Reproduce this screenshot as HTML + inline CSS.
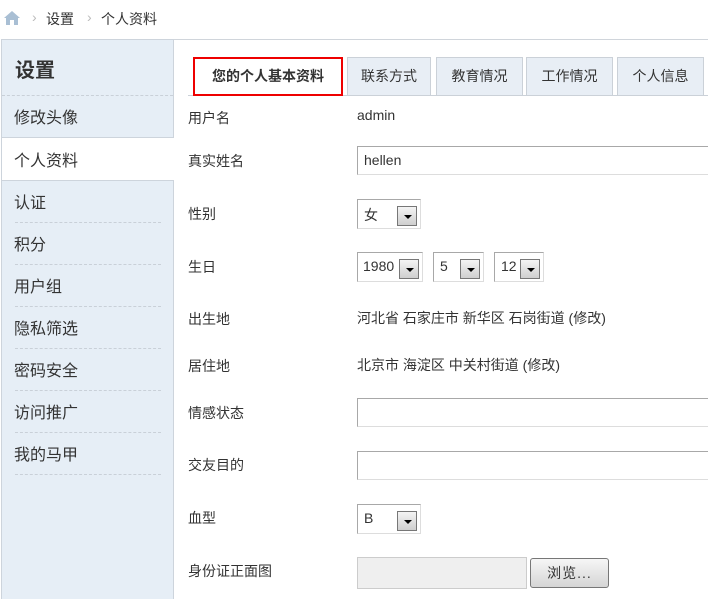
<!DOCTYPE html>
<html><head><meta charset="utf-8"><style>
*{margin:0;padding:0;box-sizing:border-box}
body{width:708px;height:593px;overflow:hidden;background:#fff;font-family:"Liberation Sans","Noto Sans CJK SC",sans-serif;font-size:14px;color:#333;position:relative}
.a{position:absolute;white-space:nowrap}
.side{position:absolute;left:1px;top:39px;width:173px;height:560px;background:#e6eef6;border:1px solid #cdd4dc;border-bottom:none}
.dash{position:absolute;left:15px;width:146px;border-top:1px dashed #c9d0d8}
.si{position:absolute;left:14px;font-size:16px;color:#333}
.tab{position:absolute;top:57px;height:38px;background:#e8eef5;border:1px solid #cbd1d8;border-bottom:none;font-size:14px;text-align:center;line-height:36px;color:#333}
.lab{position:absolute;left:188px;font-size:14px;color:#333}
.inp{position:absolute;left:357px;width:360px;height:29px;border:1px solid #a8a8a8;border-right:none;border-bottom-color:#ddd;background:#fff}
.sel{position:absolute;height:30px;border:1px solid #a8a8a8;border-right-color:#ddd;border-bottom-color:#ddd;background:#fff;font-size:14px;padding:5px 0 0 6px}
.btn{position:absolute;top:6px;right:3px;width:20px;height:20px;border:1px solid #777;background:linear-gradient(#f4f4f4,#cfcfcf)}
.btn:after{content:"";position:absolute;left:6px;top:8px;border-left:4px solid transparent;border-right:4px solid transparent;border-top:4px solid #000}
</style></head><body>
<svg class="a" style="left:3px;top:10px" width="18" height="16" viewBox="0 0 18 16"><path d="M9 1 L1 8 H3 V15 H7 V10 H11 V15 H15 V8 H17 Z" fill="#a9bfd4"/></svg>
<span class="a" style="left:32px;top:9px;color:#bbb">›</span>
<span class="a" style="left:46px;top:9px">设置</span>
<span class="a" style="left:87px;top:9px;color:#bbb">›</span>
<span class="a" style="left:101px;top:9px">个人资料</span>
<div class="a" style="left:174px;top:39px;width:540px;border-top:1px solid #d0d5db"></div>

<div class="side"></div>
<span class="a" style="left:15px;top:54px;font-size:20px;font-weight:bold;color:#333">设置</span>
<div class="dash" style="top:95px;left:2px;width:171px"></div>
<span class="si" style="top:104px">修改头像</span>
<div class="a" style="left:2px;top:137px;width:172px;height:44px;background:#fff;border-top:1px solid #cdd4dc;border-bottom:1px solid #cdd4dc"></div>
<span class="si" style="top:147px">个人资料</span>
<span class="si" style="top:189px">认证</span>
<div class="dash" style="top:222px"></div>
<span class="si" style="top:231px">积分</span>
<div class="dash" style="top:264px"></div>
<span class="si" style="top:273px">用户组</span>
<div class="dash" style="top:306px"></div>
<span class="si" style="top:315px">隐私筛选</span>
<div class="dash" style="top:348px"></div>
<span class="si" style="top:357px">密码安全</span>
<div class="dash" style="top:390px"></div>
<span class="si" style="top:399px">访问推广</span>
<div class="dash" style="top:432px"></div>
<span class="si" style="top:441px">我的马甲</span>
<div class="dash" style="top:474px"></div>

<div class="a" style="left:188px;top:95px;width:520px;border-top:1px solid #cbd1d8"></div>
<div class="tab" style="left:193px;width:150px;background:#fff;border:2px solid #e00;border-bottom:2px solid #e00;height:39px;font-weight:bold;line-height:34px">您的个人基本资料</div>
<div class="tab" style="left:347px;width:84px">联系方式</div>
<div class="tab" style="left:436px;width:87px">教育情况</div>
<div class="tab" style="left:526px;width:87px">工作情况</div>
<div class="tab" style="left:617px;width:87px">个人信息</div>

<span class="lab" style="top:108px">用户名</span><span class="a" style="left:357px;top:107px">admin</span>
<span class="lab" style="top:151px">真实姓名</span><div class="inp" style="top:146px;padding:5px 0 0 6px">hellen</div>
<span class="lab" style="top:204px">性别</span><div class="sel" style="left:357px;top:199px;width:64px">女<div class="btn"></div></div>
<span class="lab" style="top:257px">生日</span>
<div class="sel" style="left:357px;top:252px;width:66px;padding-left:5px">1980<div class="btn"></div></div>
<div class="sel" style="left:433px;top:252px;width:51px">5<div class="btn"></div></div>
<div class="sel" style="left:494px;top:252px;width:50px">12<div class="btn"></div></div>
<span class="lab" style="top:309px">出生地</span><span class="a" style="left:357px;top:308px">河北省 石家庄市 新华区 石岗街道 (修改)</span>
<span class="lab" style="top:356px">居住地</span><span class="a" style="left:357px;top:355px">北京市 海淀区 中关村街道 (修改)</span>
<span class="lab" style="top:403px">情感状态</span><div class="inp" style="top:398px"></div>
<span class="lab" style="top:455px">交友目的</span><div class="inp" style="top:451px"></div>
<span class="lab" style="top:508px">血型</span><div class="sel" style="left:357px;top:504px;width:64px">B<div class="btn"></div></div>
<span class="lab" style="top:561px">身份证正面图</span>
<div class="a" style="left:357px;top:557px;width:170px;height:32px;background:#efefef;border:1px solid #ccc"></div>
<div class="a" style="left:530px;top:558px;width:79px;height:30px;border:1px solid #777;border-radius:3px;background:linear-gradient(#f6f6f6,#d5d5d5);text-align:center;line-height:28px;font-size:14px;letter-spacing:1px">浏览...</div>
</body></html>
